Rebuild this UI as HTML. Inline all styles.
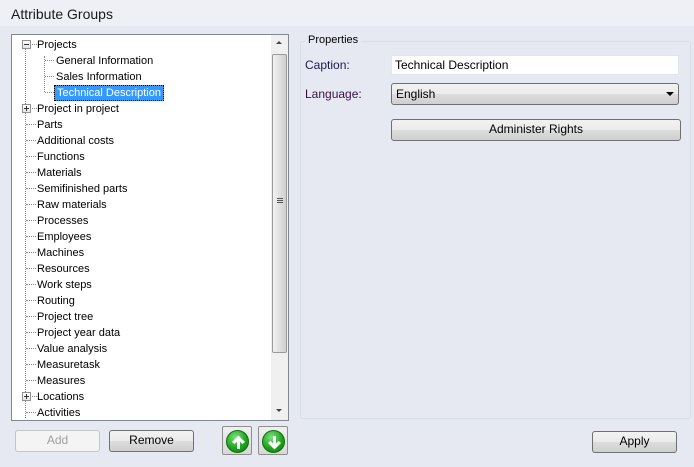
<!DOCTYPE html>
<html><head><style>
*{margin:0;padding:0;box-sizing:border-box}
body{width:694px;height:467px;background:#e6e9f2;font-family:"Liberation Sans",sans-serif;font-size:11px;color:#000;position:relative;overflow:hidden}
.a{position:absolute}
.hdr{left:0;top:0;width:694px;height:26px;background:#eef0f6}
.title{left:11px;top:6px;font-size:14px;color:#1a1a1a}
.tree{left:11px;top:34px;width:278px;height:387px;background:#fff;border:1px solid #828790}
.row{position:absolute;height:16px;line-height:16px;white-space:nowrap;margin-top:1px}
.vl{position:absolute;width:0;border-left:1px dotted #888}
.hl{position:absolute;height:0;border-top:1px dotted #888}
.box{position:absolute;width:9px;height:9px;border:1px solid #919191;background:linear-gradient(#fff,#e4e4e4)}
.box:before{content:"";position:absolute;left:1px;top:3px;width:5px;height:1px;background:#333}
.plus:after{content:"";position:absolute;left:3px;top:1px;width:1px;height:5px;background:#333}
.sb{left:259px;top:0;width:17px;height:385px;background:#f0f0f0}
.thumb{left:1px;top:19px;width:15px;height:299px;border:1px solid #9a9a9a;border-radius:2px;background:linear-gradient(90deg,#f2f2f2,#dcdcdc 60%,#cfcfcf)}
.btn{position:absolute;border:1px solid #707070;border-radius:3px;background:linear-gradient(#f2f2f2 0,#ebebeb 50%,#dddddd 51%,#cfcfcf);text-align:center;font-size:12px;color:#000}
.grp{left:300px;top:41px;width:391px;height:378px;border:1px solid #d5dfe5;border-radius:3px}
.lbl{font-size:12px}
.ar{position:absolute;width:30px;height:29px;border:1px solid #8f8f8f;border-radius:2px;background:linear-gradient(#f0f0f0,#d8d8d8)}
.ci{position:absolute;left:3px;top:3px;width:23px;height:23px;border-radius:50%;background:radial-gradient(circle at 40% 30%,#7fe07f,#1fa51f 55%,#0b7a0b);border:1px solid #0c6e0c}
</style></head><body>
<div class="a hdr"></div>
<div class="a title">Attribute Groups</div>
<div class="a tree">
 <div class="vl" style="left:13px;top:13px;height:370px"></div>
 <div class="vl" style="left:32px;top:21px;height:36px"></div>
 <div class="box" style="left:10px;top:5px"></div>
 <div class="hl" style="left:20px;top:9px;width:5px"></div>
 <div class="row" style="left:25px;top:1px">Projects</div>
 <div class="hl" style="left:33px;top:25px;width:9px"></div>
 <div class="row" style="left:44px;top:17px">General Information</div>
 <div class="hl" style="left:33px;top:41px;width:9px"></div>
 <div class="row" style="left:44px;top:33px">Sales Information</div>
 <div class="hl" style="left:33px;top:57px;width:9px"></div>
 <div class="row" style="left:42px;top:49px;background:#3399ff;color:#fff;padding:0 2px;border:1px dotted #000;line-height:14px">Technical Description</div>
 <div class="box plus" style="left:10px;top:69px"></div>
 <div class="hl" style="left:20px;top:73px;width:5px"></div>
 <div class="row" style="left:25px;top:65px">Project in project</div>
 <div id="rest"></div>
 <div class="a sb">
  <div class="a" style="left:5px;top:6px;border-left:3px solid transparent;border-right:3px solid transparent;border-bottom:3px solid #444"></div>
  <div class="a thumb"><div class="a" style="left:4px;top:143px;width:6px;height:5px;border-top:1px solid #555;border-bottom:1px solid #555"></div><div class="a" style="left:4px;top:145px;width:6px;height:1px;background:#555"></div></div>
  <div class="a" style="left:5px;top:374px;border-left:3px solid transparent;border-right:3px solid transparent;border-top:3px solid #444"></div>
 </div>
</div>
<script>
var items=["Parts","Additional costs","Functions","Materials","Semifinished parts","Raw materials","Processes","Employees","Machines","Resources","Work steps","Routing","Project tree","Project year data","Value analysis","Measuretask","Measures","Locations","Activities"];
var h="";for(var i=0;i<items.length;i++){var t=81+16*i;
if(items[i]=="Locations"){h+='<div class="box plus" style="left:10px;top:'+(t+4)+'px"></div><div class="hl" style="left:20px;top:'+(t+8)+'px;width:5px"></div>';}
else h+='<div class="hl" style="left:14px;top:'+(t+8)+'px;width:10px"></div>';
h+='<div class="row" style="left:25px;top:'+t+'px">'+items[i]+'</div>';}
document.getElementById("rest").outerHTML=h;
</script>
<div class="a grp"></div>
<div class="a" style="left:305px;top:34px;background:#e6e9f2;padding:0 3px;font-size:11px">Properties</div>
<div class="a lbl" style="left:305px;top:58px;color:#1a1a4a">Caption:</div>
<div class="a" style="left:391px;top:55px;width:288px;height:20px;background:#fff;border:1px solid #e2e5ea;font-size:12px;padding:2px 3px">Technical Description</div>
<div class="a lbl" style="left:305px;top:87px;color:#3a1040">Language:</div>
<div class="btn" style="left:391px;top:83px;width:288px;height:22px;text-align:left;padding:3px 4px">English<div class="a" style="right:4px;top:8px;border-left:4px solid transparent;border-right:4px solid transparent;border-top:4px solid #000"></div></div>
<div class="btn" style="left:391px;top:119px;width:290px;height:22px;line-height:19px">Administer Rights</div>
<div class="btn" style="left:15px;top:430px;width:85px;height:22px;line-height:19px;color:#a0a0a0;border-color:#c6c6c6;background:#f4f4f4">Add</div>
<div class="btn" style="left:109px;top:430px;width:85px;height:22px;line-height:19px">Remove</div>
<div class="ar" style="left:222px;top:426px"><div class="ci"><svg width="23" height="23" viewBox="0 0 23 23"><path d="M11.5 4.5 L5 11 L7.5 13 L10 10.5 V18 H13 V10.5 L15.5 13 L18 11 Z" fill="#fff"/></svg></div></div>
<div class="ar" style="left:258px;top:426px"><div class="ci"><svg width="23" height="23" viewBox="0 0 23 23"><path d="M11.5 18.5 L5 12 L7.5 10 L10 12.5 V5 H13 V12.5 L15.5 10 L18 12 Z" fill="#fff"/></svg></div></div>
<div class="btn" style="left:592px;top:431px;width:85px;height:22px;line-height:19px">Apply</div>
</body></html>
